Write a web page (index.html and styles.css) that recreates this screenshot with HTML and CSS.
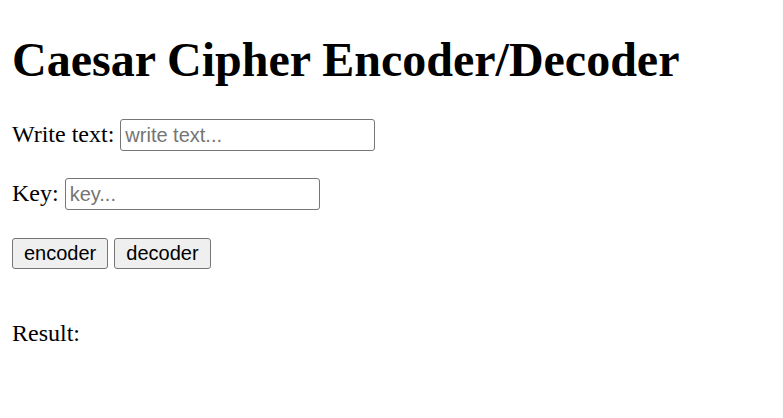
FILE: index.html
```html
<!DOCTYPE html>
<html>
<head>
<meta charset="utf-8">
<link rel="stylesheet" href="styles.css">
</head>
<body>
<h1 class="title">Caesar Cipher Encoder/Decoder</h1>
<p class="row"><label>Write text: </label><input class="field" type="text" placeholder="write text..."></p>
<p class="row"><label>Key: </label><input class="field" type="text" placeholder="key..."></p>
<p class="row row-buttons"><button class="btn">encoder</button> <button class="btn">decoder</button></p>
<p class="result">Result:</p>
</body>
</html>
```
FILE: styles.css
```css
body {
  margin: 12px;
  font-family: "Liberation Serif", "Times New Roman", serif;
  font-size: 24px;
  color: #000;
  background: #fff;
}
.title {
  font-size: 48px;
  font-weight: bold;
  margin: 20px 0 32px;
}
.row {
  margin: 27px 0;
}
.row-buttons {
  margin-top: 28px;
}
.result {
  margin: 51px 0 24px;
}
.field {
  font-family: "Liberation Sans", Arial, sans-serif;
  font-size: 20px;
  border: 1.5px solid #767676;
  border-radius: 3px;
  padding: 1.5px 4px;
  box-sizing: border-box;
  height: 32px;
  width: 255px;
}
.field::placeholder {
  color: #757575;
}
.btn {
  font-family: "Liberation Sans", Arial, sans-serif;
  font-size: 20px;
  background: #efefef;
  border: 1.5px solid #767676;
  border-radius: 3px;
  padding: 1.5px 11px;
  height: 31px;
  color: #000;
}
```
